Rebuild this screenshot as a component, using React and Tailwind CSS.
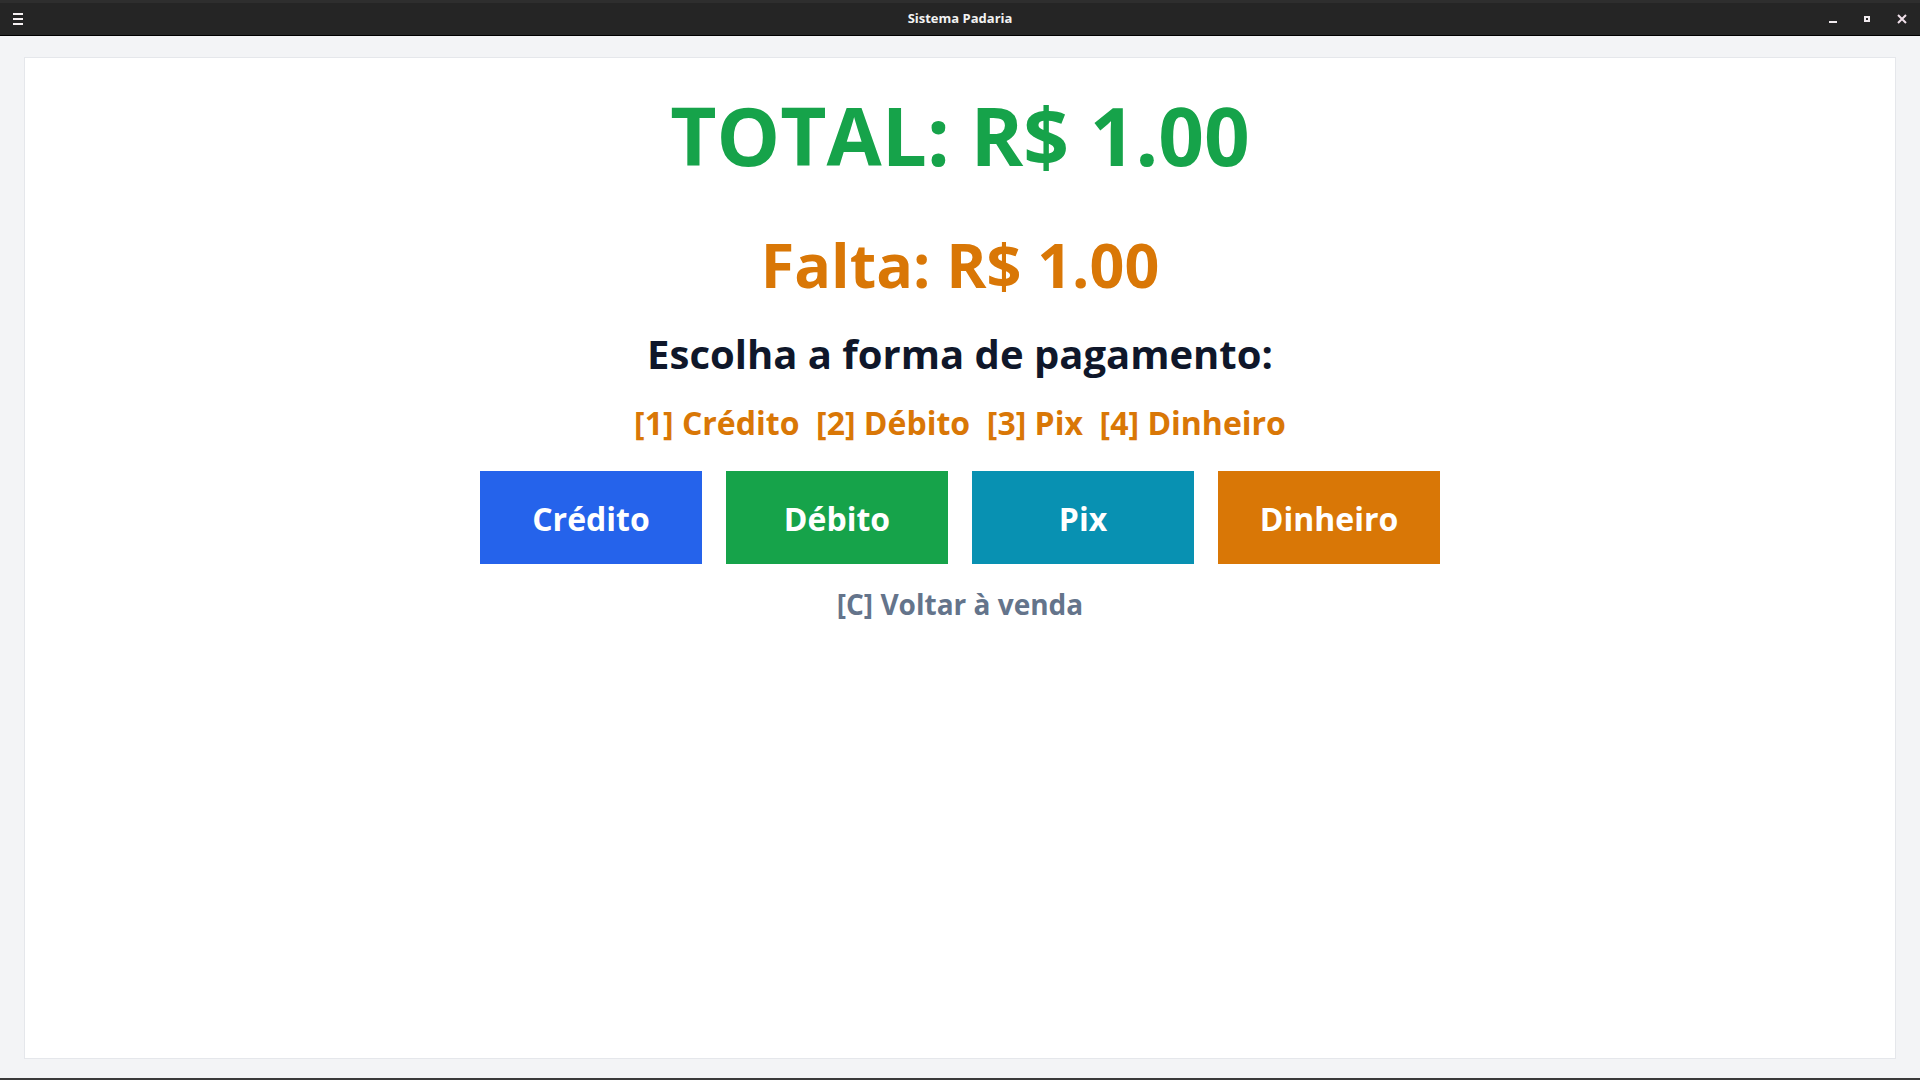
import { useState } from 'react';

const METHODS = [
  { key: '1', label: 'Crédito', bg: 'bg-[#2563eb]' },
  { key: '2', label: 'Débito', bg: 'bg-[#16a34a]' },
  { key: '3', label: 'Pix', bg: 'bg-[#0891b2]' },
  { key: '4', label: 'Dinheiro', bg: 'bg-[#d97706]' },
];

function TitleBar() {
  return (
    <div className="h-[36px] shrink-0 grid grid-cols-[1fr_auto_1fr] items-center bg-[#252525] border-t-[3px] border-t-[#2e2e2e] border-b border-b-black text-[#f2f2f2]">
      <div className="flex">
        <div className="w-[36px] flex justify-center">
          <div className="w-[10px] flex flex-col gap-[3px] mt-[-1px]">
            <span className="h-[2px] bg-[#f5f0f2]" />
            <span className="h-[2px] bg-[#f5f0f2]" />
            <span className="h-[2px] bg-[#f5f0f2]" />
          </div>
        </div>
      </div>
      <span className="text-[13px] font-bold">Sistema Padaria</span>
      <div className="flex items-center justify-end">
        <div className="w-[34px] h-[30px] flex items-center justify-center">
          <span className="w-[8px] h-[2px] bg-[#f0eaee] mt-[6px]" />
        </div>
        <div className="w-[34px] h-[30px] flex items-center justify-center">
          <span className="w-[6px] h-[6px] border-[2px] border-[#f0eaee] mt-[-1px]" />
        </div>
        <div className="w-[36px] h-[30px] flex items-center justify-center">
          <svg width="10" height="10" viewBox="0 0 10 10">
            <path d="M1 1 L9 9 M9 1 L1 9" stroke="#f0e0ea" strokeWidth="2" />
          </svg>
        </div>
      </div>
    </div>
  );
}

export default function App() {
  const [method, setMethod] = useState(null);

  return (
    <div className="h-screen flex flex-col bg-[#f3f4f6] font-['Open_Sans',sans-serif] border-b-2 border-b-[#3a3a3a]">
      <TitleBar />
      <div className="flex-1 flex flex-col pt-[21px] px-6 pb-[19px] min-h-0">
        <div className="flex-1 bg-white border border-[#e5e7eb] flex flex-col items-center pt-[36px] font-bold">
          <h1 className="text-[80px] leading-[81px] text-[#16a34a]">TOTAL: R$ 1.00</h1>
          <p className="mt-[59px] text-[61px] leading-[62px] text-[#d97706]">Falta: R$ 1.00</p>
          <h2 className="mt-[38px] text-[40px] leading-[40px] text-[#0f172a]">Escolha a forma de pagamento:</h2>
          <p className="mt-[33px] text-[32px] leading-[32px] text-[#d97706] whitespace-pre">
            {METHODS.map((m) => `[${m.key}] ${m.label}`).join('  ')}
          </p>

          <div className="mt-[32px] flex gap-6">
            {METHODS.map((m) => (
              <button
                key={m.key}
                onClick={() => setMethod(m.key)}
                className={`w-[222px] h-[93px] ${m.bg} text-white text-[32px] font-bold flex items-center justify-center pt-[3px]`}
              >
                {m.label}
              </button>
            ))}
          </div>

          <button
            onClick={() => setMethod(null)}
            className="mt-[26px] text-[28px] leading-[28px] font-bold text-[#64748b]"
          >
            [C] Voltar à venda
          </button>
        </div>
      </div>
    </div>
  );
}
